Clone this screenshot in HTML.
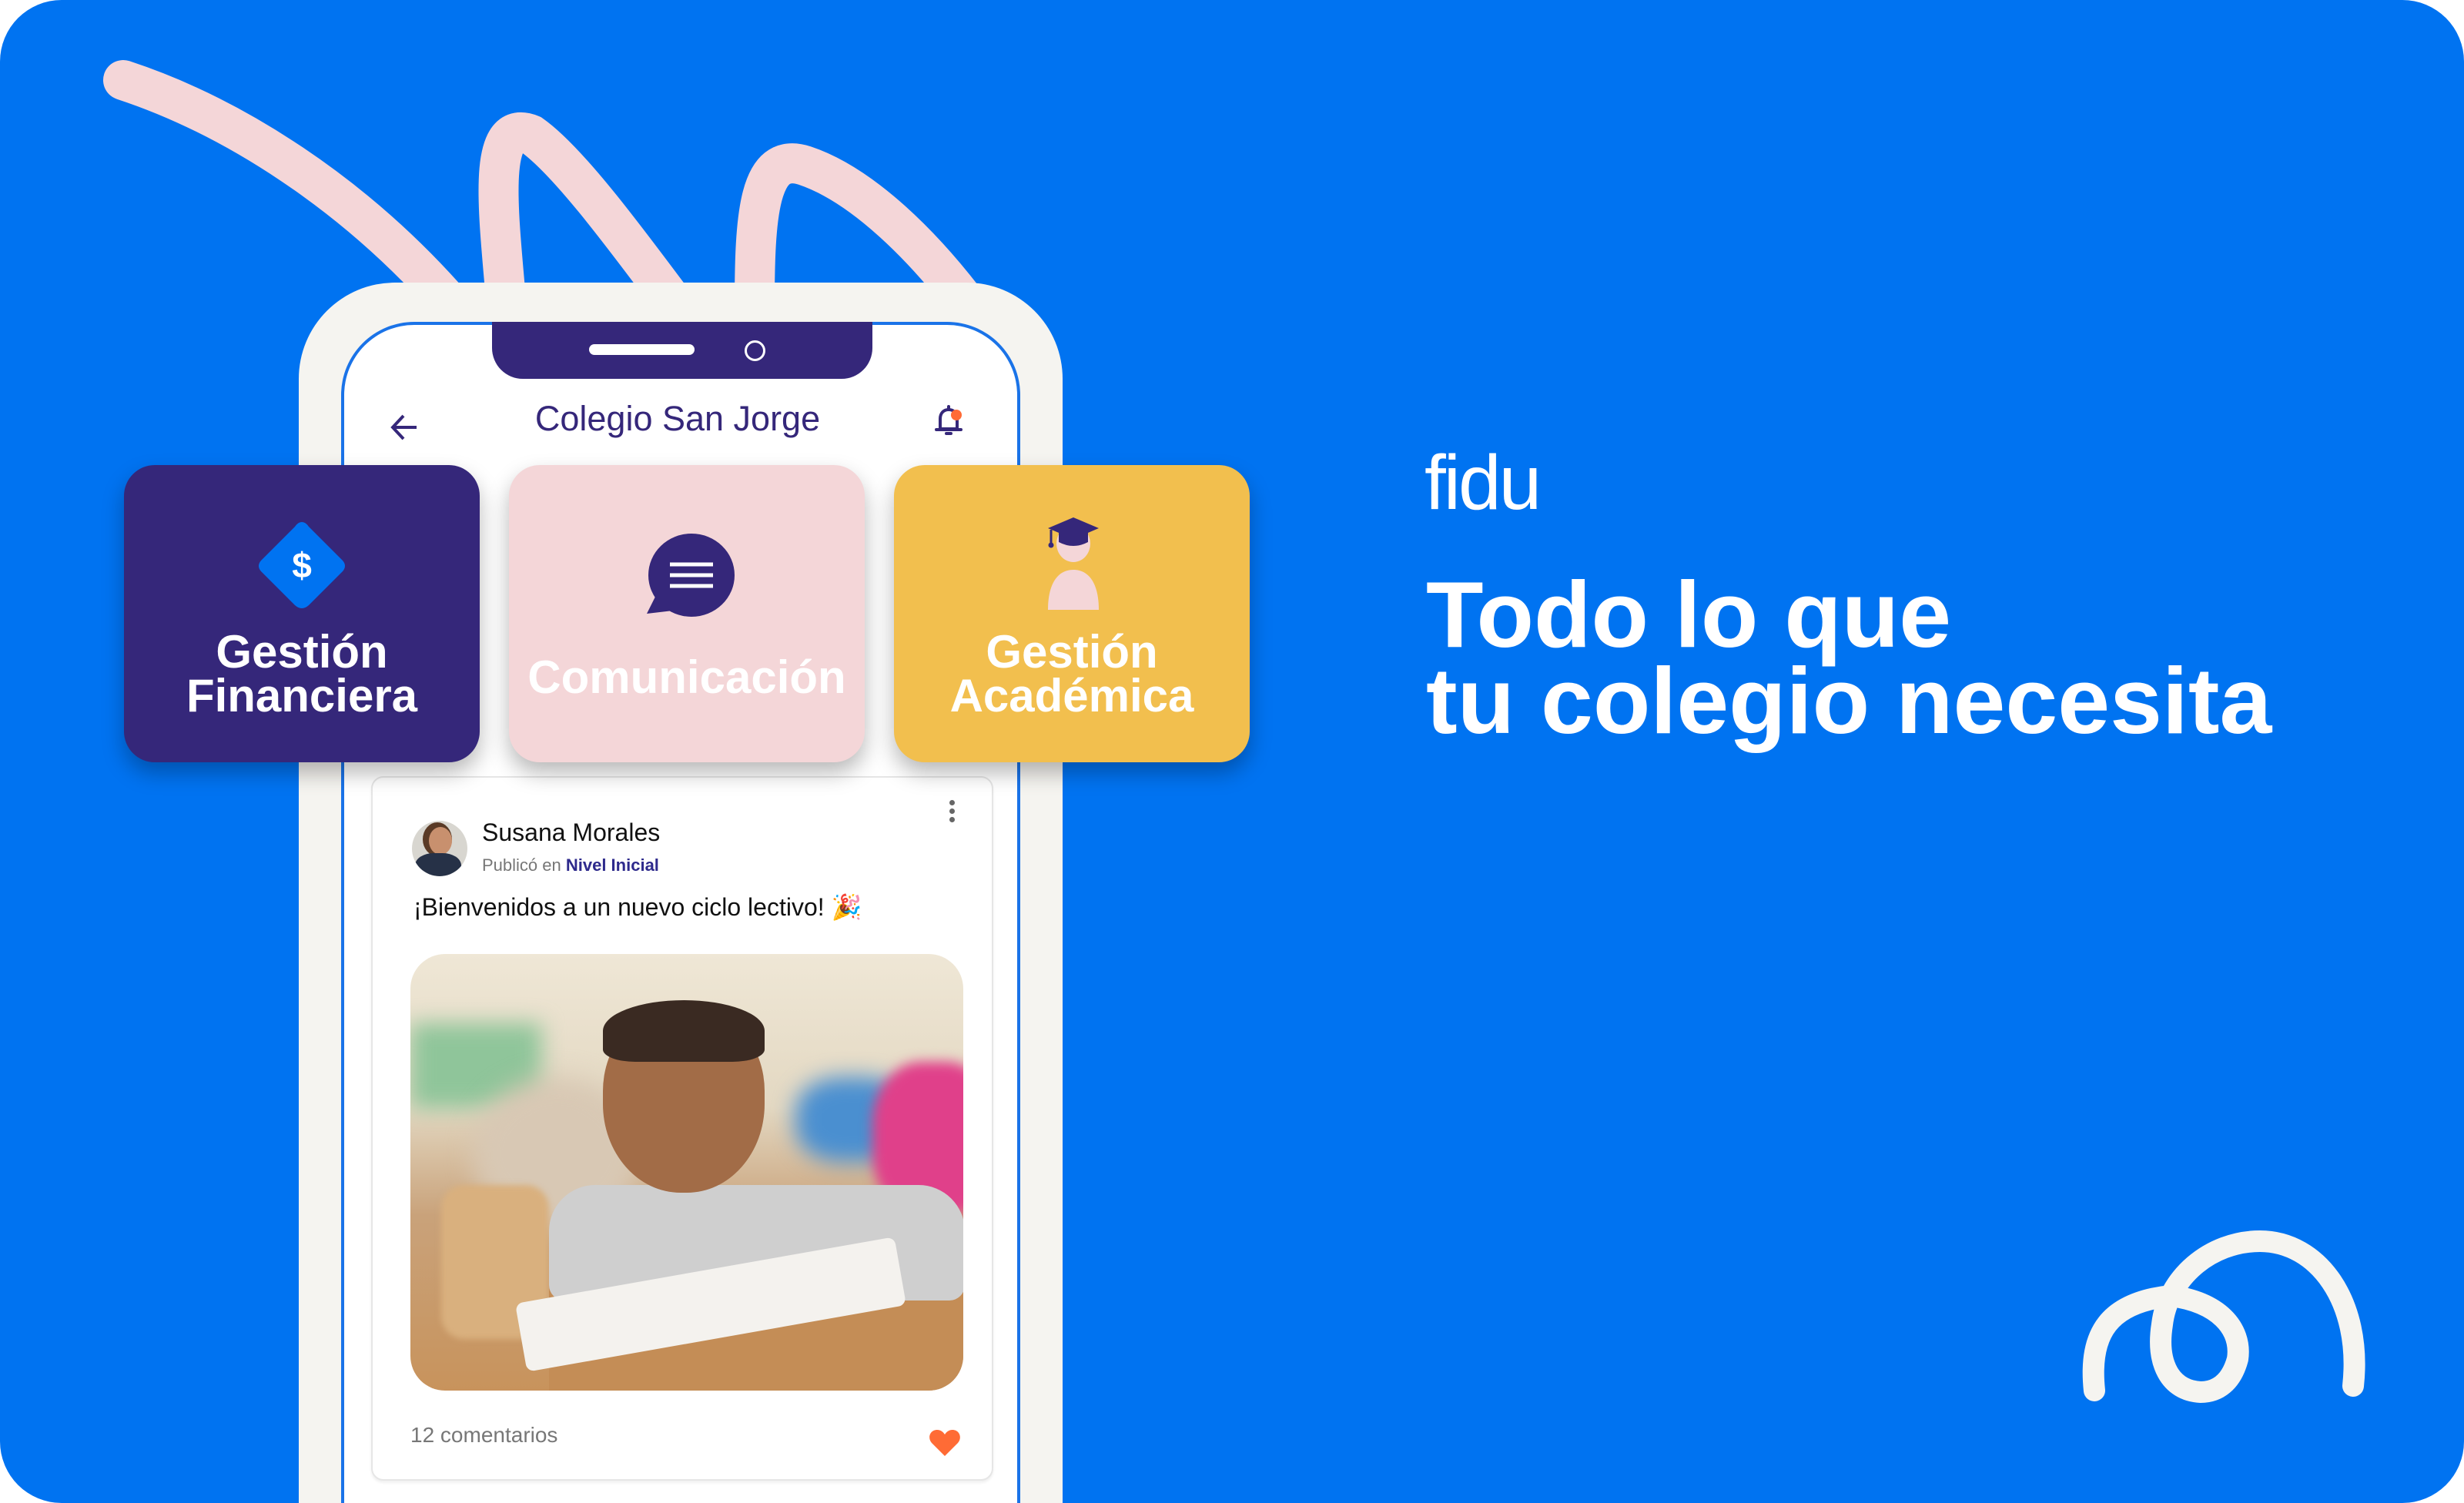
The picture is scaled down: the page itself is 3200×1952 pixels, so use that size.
<!DOCTYPE html>
<html><head><meta charset="utf-8"><style>
*{margin:0;padding:0;box-sizing:border-box}
html,body{width:3200px;height:1952px;overflow:hidden}
body{background:#fff;font-family:"Liberation Sans",sans-serif;position:relative}
#bg{position:absolute;left:0;top:0;width:3200px;height:1952px;background:#0073F1;border-radius:80px;overflow:hidden}
.abs{position:absolute}
.card{position:absolute;top:604px;width:462px;height:386px;border-radius:40px;box-shadow:0 14px 28px rgba(0,0,0,.28);color:#fff;text-align:center;font-weight:bold;font-size:60px;line-height:57px}
</style></head><body>
<div id="bg">
<svg class="abs" style="left:0;top:0" width="3200" height="1952">
<g fill="none" stroke="#F4D6D8" stroke-width="52" stroke-linecap="round">
<path d="M160 104 C 300 150, 460 250, 590 400"/>
<path d="M658 400 C 648 280, 630 150, 690 175 C 740 210, 820 320, 880 400"/>
<path d="M980 400 C 980 280, 985 195, 1045 215 C 1120 240, 1200 320, 1260 400"/>
</g>
<path d="M2720 1806 C 2712 1730, 2740 1692, 2818 1683 C 2880 1690, 2912 1725, 2906 1765 C 2898 1795, 2880 1808, 2858 1808 C 2818 1806, 2800 1770, 2808 1720 C 2815 1660, 2870 1612, 2935 1612 C 3010 1612, 3068 1690, 3056 1800" fill="none" stroke="#F5F4F0" stroke-width="28" stroke-linecap="round"/>
</svg>
<!-- phone -->
<div class="abs" style="left:388px;top:367px;width:992px;height:1585px;background:#F5F4F0;border-radius:125px 125px 0 0"></div>
<div class="abs" style="left:443px;top:418px;width:882px;height:1534px;background:#fff;border:4px solid #1A73E8;border-bottom:none;border-radius:95px 95px 0 0"></div>
<div class="abs" style="left:639px;top:418px;width:494px;height:74px;background:#35277A;border-radius:0 0 40px 40px"></div>
<div class="abs" style="left:765px;top:447px;width:137px;height:14px;background:#fff;border-radius:7px"></div>
<div class="abs" style="left:967px;top:442px;width:27px;height:27px;border:3px solid #fff;border-radius:50%"></div>
<svg class="abs" style="left:505px;top:535px" width="40" height="40" viewBox="0 0 40 40"><path d="M36 20 H5 M19 5 L5 20 L19 35" fill="none" stroke="#35277A" stroke-width="4"/></svg>
<div class="abs" style="left:640px;top:518px;width:480px;text-align:center;font-size:45px;color:#35277A">Colegio San Jorge</div>
<svg class="abs" style="left:1212px;top:524px" width="44" height="46" viewBox="0 0 44 46"><path d="M9 33 V20 C9 12 14 8 20 8 C26 8 31 12 31 20 V33 Z M4 34 H36 M20 4 V8 M17 39 H23" fill="none" stroke="#35277A" stroke-width="4" stroke-linecap="round"/><circle cx="30" cy="15" r="7" fill="#FF6B35"/></svg>
<!-- post card -->
<div class="abs" style="left:482px;top:1008px;width:808px;height:915px;background:#fff;border:2px solid #e6e6e6;border-radius:16px;box-shadow:0 3px 3px rgba(0,0,0,.06)"></div>
<div class="abs" style="left:1233px;top:1039px;width:7px;height:7px;border-radius:50%;background:#666;box-shadow:0 11px 0 #666,0 22px 0 #666"></div>
<div class="abs" style="left:535px;top:1066px;width:72px;height:72px;border-radius:50%;overflow:hidden;background:#d8d6d0">
 <div class="abs" style="left:22px;top:8px;width:30px;height:36px;border-radius:50%;background:#c8906e;box-shadow:-4px -2px 0 4px #5a3a26"></div>
 <div class="abs" style="left:4px;top:42px;width:60px;height:40px;border-radius:40% 40% 0 0;background:#263147"></div>
</div>
<div class="abs" style="left:626px;top:1063px;font-size:32px;color:#111">Susana Morales</div>
<div class="abs" style="left:626px;top:1111px;font-size:22px;color:#777">Publicó en <b style="color:#2E2A8C">Nivel Inicial</b></div>
<div class="abs" style="left:537px;top:1159px;font-size:32px;color:#111">¡Bienvenidos a un nuevo ciclo lectivo! 🎉</div>
<div class="abs" style="left:533px;top:1239px;width:718px;height:567px;border-radius:45px;overflow:hidden;background:linear-gradient(180deg,#efe7d6 0%,#e3d8c2 35%,#c9a27a 60%,#c8935c 100%)">
 <div class="abs" style="left:0;top:90px;width:170px;height:110px;background:#8fc59a;filter:blur(14px)"></div>
 <div class="abs" style="left:80px;top:160px;width:220px;height:200px;background:#d8c8b4;border-radius:50%;filter:blur(16px)"></div>
 <div class="abs" style="left:500px;top:160px;width:150px;height:110px;background:#4a8fd0;border-radius:40%;filter:blur(14px)"></div>
 <div class="abs" style="left:600px;top:140px;width:160px;height:200px;background:#e0408a;border-radius:40%;filter:blur(8px)"></div>
 <div class="abs" style="left:40px;top:300px;width:140px;height:200px;background:#d9b07e;border-radius:30px;filter:blur(4px)"></div>
 <div class="abs" style="left:180px;top:380px;width:540px;height:190px;background:#c48d56"></div>
 <div class="abs" style="left:180px;top:300px;width:540px;height:150px;background:#cfcfcf;border-radius:60px 60px 20px 20px"></div>
 <div class="abs" style="left:140px;top:410px;width:500px;height:90px;background:#f4f2ee;transform:rotate(-10deg);border-radius:10px"></div>
 <div class="abs" style="left:250px;top:70px;width:210px;height:240px;background:#a26c47;border-radius:45% 45% 48% 48%"></div>
 <div class="abs" style="left:250px;top:60px;width:210px;height:80px;background:#3a2a22;border-radius:50% 50% 20% 20%"></div>
</div>
<div class="abs" style="left:533px;top:1848px;font-size:28px;color:#777">12 comentarios</div>
<svg class="abs" style="left:1206px;top:1855px" width="42" height="38" viewBox="0 0 42 38"><path d="M21 36 L4 19 C-2 12 2 2 11 2 C16 2 19 5 21 8 C23 5 26 2 31 2 C40 2 44 12 38 19 Z" fill="#FF6B35"/></svg>
<!-- cards -->
<div class="card" style="left:161px;background:#35277A">
 <svg class="abs" style="left:172px;top:70px" width="118" height="122" viewBox="0 0 118 122"><path d="M59 4 Q64 4 68 10 L112 54 Q118 61 112 68 L68 112 Q59 120 50 112 L6 68 Q0 61 6 54 L50 10 Q54 4 59 4Z" fill="#0073F1"/><text x="59" y="76" text-anchor="middle" font-size="46" fill="#fff" font-family="Liberation Sans">$</text></svg>
 <div class="abs" style="left:0;top:214px;width:462px">Gestión<br>Financiera</div>
</div>
<div class="card" style="left:661px;background:#F4D6D8">
 <svg class="abs" style="left:165px;top:85px" width="130" height="120" viewBox="0 0 130 120"><ellipse cx="72" cy="58" rx="56" ry="54" fill="#35277A"/><path d="M28 80 L14 108 L48 104 Z" fill="#35277A"/><path d="M44 44 H100 M44 58 H100 M44 72 H100" stroke="#fff" stroke-width="5"/></svg>
 <div class="abs" style="left:0;top:247px;width:462px">Comunicación</div>
</div>
<div class="card" style="left:1161px;background:#F2BF4E">
 <svg class="abs" style="left:192px;top:60px" width="80" height="130" viewBox="0 0 80 130"><ellipse cx="41" cy="42" rx="22" ry="24" fill="#F4D6D8"/><path d="M8 128 C8 95 20 76 41 76 C62 76 74 95 74 128 Z" fill="#F4D6D8"/><path d="M41 8 L74 22 L41 36 L8 22 Z" fill="#35277A"/><path d="M22 26 V40 Q41 50 60 40 V26 Z" fill="#35277A"/><path d="M12 24 V42" stroke="#35277A" stroke-width="3"/><circle cx="12" cy="44" r="3.5" fill="#35277A"/></svg>
 <div class="abs" style="left:0;top:214px;width:462px">Gestión<br>Académica</div>
</div>
<!-- right text -->
<div class="abs" style="left:1850px;top:570px;font-size:100px;color:#fff;letter-spacing:-3px;font-weight:normal">fidu</div>
<div class="abs" style="left:1852px;top:742px;font-size:122px;line-height:112px;color:#fff;font-weight:bold;white-space:nowrap">Todo lo que<br>tu colegio necesita</div>
</div>
</body></html>
